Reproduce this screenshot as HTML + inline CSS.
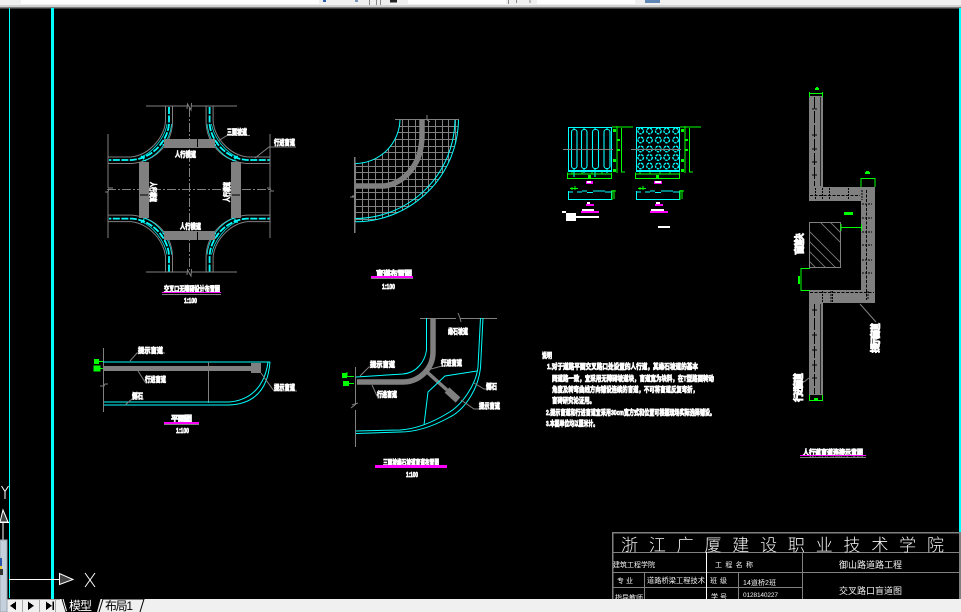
<!DOCTYPE html>
<html><head><meta charset="utf-8"><style>
html,body{margin:0;padding:0;background:#000;width:961px;height:612px;overflow:hidden}
svg{display:block}
text{font-family:"Liberation Sans","Noto Sans CJK SC",sans-serif}
.w{fill:#fff;stroke:#fff;stroke-width:.75;font-weight:700;font-size:7.500px}
.t{fill:#f2f2f2;font-size:7px}
.g{stroke:#808080;fill:none;stroke-width:1}
.c{stroke:#0ff;fill:none;stroke-width:1}
.l{stroke:#0f0;fill:none;stroke-width:1}
.f{fill:#808080}
.p{fill:#f0f}
.b{stroke:#000;fill:none;stroke-width:.8}
</style></head><body>
<svg width="961" height="612" viewBox="0 0 961 612" xmlns="http://www.w3.org/2000/svg" shape-rendering="crispEdges">
<defs>
<clipPath id="qc"><path d="M355 119H458V122A103 103 0 0 1 355 222V163A45 45 0 0 0 400 119Z"/></clipPath>
<g id="q" shape-rendering="auto">
<path class="g" d="M165.500 106V121C165 136 150 155 131 157H108"/>
<path class="g" d="M172.500 106V122C172 142 158 161 132 163.500H108"/>
<path class="c" style="stroke-width:1.800;stroke-dasharray:7 1.500" d="M169 107V122C169 138 155 158 132 160H109"/>
<path class="c" style="stroke-width:.7" d="M167 124C165 138 152 153 141 157M171.500 124C170 142 156 158 142 161"/>
<path class="c" style="stroke-width:1.500;stroke-dasharray:1.500 1.500" d="M161 142L165 147M141 156L146 161"/>
</g>
<g id="sec">
<path class="c" d="M568.500 191V199.500H611.500V191M568 192H573M577 192H582M582 191H587M587 192.500H593M593 191H599M599 191H605M605 192H611"/>
</g>
<g id="sg">
<path class="l" style="stroke-width:1.200" d="M0 -1H21M5 -2V45M9.500 0V44H13"/>
<rect x="1" y="31" width="3" height="3" fill="#0f0"/><rect x="1" y="1" width="3" height="3" fill="#0f0"/><rect x="1" y="41" width="3" height="3" fill="#0f0"/>
<rect x="5" y="11" width="3" height="2" fill="#0f0"/><rect x="5" y="21" width="3" height="2" fill="#0f0"/>
</g>
<g id="sg2">
<path class="l" d="M-44.500 1.500V7.500H-.5V1.500M-44 3H0"/>
<rect x="-24" y="4" width="3" height="3" fill="#0f0"/>
<path d="M-40 1V3M-30 1V3M-20 1V3M-10 1V3" class="l"/>
</g>
</defs>

<rect width="961" height="612" fill="#000"/>

<!-- toolbar -->
<rect width="961" height="5" fill="#f0f0f0"/>
<rect y="5" width="961" height="2" fill="#d2d2d2"/>
<rect y="7" width="961" height="1.500" fill="#7c7c7c"/>
<rect x="21" y="0" width="298" height="4" fill="#fff"/>
<rect x="408" y="0" width="98" height="4" fill="#fff"/>
<rect x="537" y="0" width="98" height="4" fill="#fff"/>
<rect x="645" y="0" width="15" height="3" fill="#5f86b5"/>
<rect x="390" y="0" width="7" height="2.500" fill="#222"/>
<rect x="323" y="0" width="3" height="2" fill="#2a5fb0"/><rect x="355" y="0" width="3" height="2" fill="#7a94b8"/>
<path d="M369.500 0V5M376.500 0V5M380.500 0V5M508.500 0V4M516.500 0V3M530 0V3" stroke="#888" fill="none"/>

<!-- viewport frame lines -->
<rect x="9" y="8" width="1" height="590" fill="#0ff"/>
<rect x="51" y="8" width="3" height="591" fill="#0ff"/>
<rect x="959" y="8" width="2" height="524" fill="#0ff"/>
<rect x="959" y="532" width="2" height="67" fill="#808080"/>

<!-- ============ Crossroad plan ============ -->
<g shape-rendering="auto">
<use href="#q"/>
<use href="#q" transform="translate(378.600 0) scale(-1 1)"/>
<use href="#q" transform="translate(0 378.600) scale(1 -1)"/>
<use href="#q" transform="translate(378.600 378.600) scale(-1 -1)"/>
</g>
<path class="g" d="M146 106H187M191 106H237M108 134V188M108 191V238M270 134V188M270 191V238M146 272H187M191 272H237"/>
<path class="g" style="stroke-dasharray:9 2 2 2" d="M189.500 108V270"/>
<path class="g" style="stroke-dasharray:9 2 2 2" d="M107 189.500H270"/>
<path class="g" shape-rendering="auto" d="M187 109L187.500 104L191 110L191.500 103M105 192H108L109 188L113 188M267 188H270L271 191L274 191M187 275L187.500 270L191 276L191.500 269"/>
<rect x="164" y="139" width="51" height="9" class="f"/>
<rect x="164" y="231" width="51" height="9" class="f"/>
<rect x="139" y="162" width="10" height="56" class="f"/>
<rect x="231" y="162" width="10" height="56" class="f"/>
<path d="M197.500 139V147M197.500 232V240M140 195H148M232 195H240" stroke="#000" fill="none"/>
<path class="g" shape-rendering="auto" d="M218 141L227 135.500H250M255 158L269 147H296"/>

<text class="w" x="175" y="157" textLength="21" lengthAdjust="spacingAndGlyphs">人行横道</text>
<text class="w" x="180" y="229" textLength="21" lengthAdjust="spacingAndGlyphs">人行横道</text>
<text class="w" x="227" y="134.500" textLength="20" lengthAdjust="spacingAndGlyphs">三面坡道</text>
<text class="w" x="274" y="145" textLength="21" lengthAdjust="spacingAndGlyphs">行进盲道</text>
<text class="w" transform="translate(150.500 182) rotate(90)" textLength="20" lengthAdjust="spacingAndGlyphs">人行横道</text>
<text class="w" transform="translate(229.500 202) rotate(-90)" textLength="20" lengthAdjust="spacingAndGlyphs">人行横道</text>
<text class="w" x="164" y="291.500" textLength="56" lengthAdjust="spacingAndGlyphs">交叉口无障碍设计布置图</text>
<rect x="162" y="292" width="59" height="1" class="p"/>
<rect x="162" y="294" width="59" height="1" fill="#808080"/>
<text class="w" x="184" y="303" textLength="13" lengthAdjust="spacingAndGlyphs">1:100</text>

<!-- ============ Grid quarter ============ -->
<g clip-path="url(#qc)">
<path class="g" d="M355.500 119V223M362.500 119V223M368.500 119V223M375.500 119V223M382.500 119V223M388.500 119V223M395.500 119V223M402.500 119V223M408.500 119V223M415.500 119V223M422.500 119V223M428.500 119V223M435.500 119V223M442.500 119V223M448.500 119V223M455.500 119V223"/>
<path class="g" d="M355 119.500H459M355 126.500H459M355 132.500H459M355 139.500H459M355 146.500H459M355 152.500H459M355 159.500H459M355 166.500H459M355 172.500H459M355 179.500H459M355 186.500H459M355 192.500H459M355 199.500H459M355 206.500H459M355 212.500H459M355 219.500H459"/>
</g>
<g shape-rendering="auto">
<path d="M355 186H382C398 186 422 170 422 135V119" stroke="#808080" stroke-width="5.500" fill="none"/>
<path class="c" d="M400 119.500A45 45 0 0 1 355 163.500"/>
<path class="c" d="M455 119.500A100 100 0 0 1 355 218.500"/>
<path class="c" d="M458.500 119.500A103.500 103.500 0 0 1 355 221.800"/>
</g>
<rect x="354" y="157" width="1.500" height="76" fill="#808080"/>
<path class="g" d="M395 119.500H459"/>
<path class="g" shape-rendering="auto" d="M427 115V120L430 122M352 196H355M350 197H354"/>
<text class="w" x="376" y="276" textLength="36" lengthAdjust="spacing">盲道布置图</text>
<rect x="371" y="276" width="42" height="2" class="p"/>
<rect x="371" y="278" width="42" height="1" fill="#808080"/>
<text class="w" x="382" y="289" textLength="13" lengthAdjust="spacingAndGlyphs">1:100</text>

<!-- ============ Tactile tiles ============ -->
<rect x="568.500" y="127.500" width="43" height="43" class="c"/>
<rect x="636.500" y="127.500" width="43" height="43" class="c"/>
<g shape-rendering="auto" class="c" style="stroke-width:1.100">
<rect x="571.500" y="129.500" width="5.500" height="39" rx="2.500"/>
<rect x="581.500" y="129.500" width="5.500" height="39" rx="2.500"/>
<rect x="592.500" y="129.500" width="6" height="39" rx="2.500"/>
<rect x="604" y="129.500" width="6" height="39" rx="2.500"/>
<path d="M574 130V127M584 130V127M595 130V127M607 130V127M574 168V177M584 168V173M595 168V177M607 168V173"/>
</g>
<g shape-rendering="auto" class="c" style="stroke-width:1.400;stroke-dasharray:2.500 .8">
<circle cx="640.700" cy="131" r="2.800"/><circle cx="649.500" cy="131" r="2.800"/><circle cx="658.300" cy="131" r="2.800"/><circle cx="666.700" cy="131" r="2.800"/><circle cx="675.700" cy="131" r="2.800"/>
<circle cx="640.700" cy="140" r="2.800"/><circle cx="649.500" cy="140" r="2.800"/><circle cx="658.300" cy="140" r="2.800"/><circle cx="666.700" cy="140" r="2.800"/><circle cx="675.700" cy="140" r="2.800"/>
<circle cx="640.700" cy="149" r="2.800"/><circle cx="649.500" cy="149" r="2.800"/><circle cx="658.300" cy="149" r="2.800"/><circle cx="666.700" cy="149" r="2.800"/><circle cx="675.700" cy="149" r="2.800"/>
<circle cx="640.700" cy="157.500" r="2.800"/><circle cx="649.500" cy="157.500" r="2.800"/><circle cx="658.300" cy="157.500" r="2.800"/><circle cx="666.700" cy="157.500" r="2.800"/><circle cx="675.700" cy="157.500" r="2.800"/>
<circle cx="640.700" cy="166" r="2.800"/><circle cx="649.500" cy="166" r="2.800"/><circle cx="658.300" cy="166" r="2.800"/><circle cx="666.700" cy="166" r="2.800"/><circle cx="675.700" cy="166" r="2.800"/>
</g>
<rect x="563" y="149" width="50" height="1" fill="#808080"/>
<rect x="631" y="149" width="50" height="1" fill="#808080"/>
<use href="#sg" x="612" y="128"/>
<use href="#sg" x="680" y="128"/>
<use href="#sg2" x="612" y="171"/>
<use href="#sg2" x="680" y="171"/>
<path class="c" d="M568 171.500H612M636 171.500H680"/>
<use href="#sec"/>
<use href="#sec" x="68"/>
<path class="l" style="stroke-width:1.300" d="M570 188.500H578M572 187V190M575 186V190M612 190V200M614 190V199M612 191H616M638 188.500H646M640 187V190M643 186V190M680 190V200M682 190V199M680 191H684"/>
<rect x="586" y="181" width="7" height="3" fill="#f0f"/><rect x="587" y="181" width="4" height="2" fill="#fff"/>
<rect x="654" y="181" width="8" height="3" fill="#f0f"/><rect x="655" y="181" width="6" height="2" fill="#fff"/>
<rect x="586" y="204" width="8" height="2" fill="#f0f"/><rect x="587" y="202" width="3" height="2" fill="#fff"/>
<rect x="655" y="204" width="8" height="2" fill="#f0f"/><rect x="656" y="202" width="4" height="2" fill="#fff"/>
<rect x="581" y="211" width="18" height="2" fill="#f0f"/><rect x="582" y="209" width="12" height="2" fill="#fff"/>
<rect x="650" y="211" width="18" height="2" fill="#f0f"/><rect x="651" y="209" width="13" height="2" fill="#fff"/>
<rect x="566" y="213" width="10" height="8" fill="#fff"/><rect x="562" y="211" width="4" height="2" fill="#fff"/><rect x="576" y="216" width="23" height="2" fill="#fff"/>
<rect x="658" y="226" width="12" height="2" fill="#fff"/>

<!-- ============ Wall diagram ============ -->
<path class="f" d="M809 96H823V187H875V303H823V395H809V290H861V201H809Z"/>
<path d="M814.500 97V186M820.500 97V186M814.500 304V394M820.500 304V394" stroke="#000" fill="none" style="stroke-dasharray:12 2"/>
<path d="M820.500 97V186M820.500 304V394" stroke="#2a2a2a" fill="none"/>
<path d="M810 195.500H860M866.500 190V300M810 292.500H874" stroke="#000" fill="none" style="stroke-dasharray:3 1.500"/>
<path d="M815.500 188V200M822.500 188V200M829.500 188V200M848.500 188V200M862 204H872M862 218H872M862 232H872M862 245H872M862 260H872M862 273H872M822.500 291V302M831 291V302M832.500 291V302M862 190V200M868 291V300M812 109H818M812 135H818M812 149H818M812 162H818M812 175H818M812 310H818M812 335H818M812 350H818M812 365H818M812 378H818" stroke="#000" fill="none" style="stroke-dasharray:2 1"/>
<rect x="809.500" y="222.500" width="31" height="45" fill="#000" stroke="#808080"/>
<clipPath id="hc"><rect x="810" y="223" width="30" height="44"/></clipPath>
<g clip-path="url(#hc)" shape-rendering="auto" stroke="#808080" fill="none" stroke-width=".8">
<path d="M800 222L850 272M800 232L850 282M800 242L850 292M800 252L850 302M810 212L860 262M820 212L870 262M790 222L840 272"/>
</g>
<path class="l" d="M841 227.500H861.500M861.500 224V231M841 224V231M861 178V187M875 178V187M861 178.500H875M809.500 93.500H822.500M809.500 92V97M822.500 92V97M809.500 400.500H822.500M809.500 395V401M822.500 395V401M810 268.500H801V290.500H810M801 268V291" style="stroke-width:1.200"/>
<rect x="815" y="88" width="4" height="2" fill="#0f0"/><rect x="816" y="87" width="2" height="1" fill="#0f0"/>
<rect x="865" y="172" width="5" height="2" fill="#0f0"/><rect x="866" y="171" width="3" height="1" fill="#0f0"/>
<rect x="844" y="212" width="9" height="3" fill="#0f0"/>
<rect x="798" y="276" width="2" height="8" fill="#0f0"/>
<rect x="814" y="398" width="4" height="2" fill="#0f0"/>
<path class="g" shape-rendering="auto" d="M860 304L876 322M803 382C805 382 806 380 809 378"/>
<text class="w" transform="translate(803 255) rotate(-90)" textLength="22" lengthAdjust="spacing" style="font-size:10px">盲道块</text>
<text class="w" transform="translate(802 402) rotate(-90)" textLength="29" lengthAdjust="spacing" style="font-size:10px">行进盲道</text>
<text class="w" transform="translate(879 353) rotate(-90)" textLength="30" lengthAdjust="spacing" style="font-size:10px">提示盲道</text>
<text class="w" x="803" y="455" textLength="60" lengthAdjust="spacingAndGlyphs">人行道盲道连接示意图</text>
<rect x="800" y="455" width="66" height="1" class="p"/>
<rect x="800" y="457" width="66" height="1" fill="#808080"/>

<!-- ============ Plan view ============ -->
<rect x="103" y="348" width="1" height="64" fill="#808080"/>
<path class="c" d="M103 362H270"/>
<rect x="103" y="366" width="148" height="5" class="f"/>
<rect x="251" y="363" width="10" height="10" class="f"/>
<rect x="208" y="362" width="1" height="41" fill="#808080"/>
<g shape-rendering="auto">
<path class="c" d="M104 402H229C252 400 265 385 268 362"/>
<path class="c" d="M104 405H229C256 404 268 388 270 362"/>
<path class="g" d="M130 361L137 353H165M138 371L145 382H166M125 405L132 399H144M261 373L274 391H297M100 386H104L105 384H108"/>
</g>
<rect x="94" y="359" width="5" height="5" fill="#0f0"/><rect x="94" y="366" width="6" height="5" fill="#0f0" stroke="#0f0"/>
<path class="l" d="M99 361.500H103M99 368.500H103"/>
<text class="w" x="138" y="353" textLength="25" lengthAdjust="spacingAndGlyphs">提示盲道</text>
<text class="w" x="145" y="382" textLength="21" lengthAdjust="spacingAndGlyphs">行进盲道</text>
<text class="w" x="132" y="398.500" textLength="11" lengthAdjust="spacingAndGlyphs">侧石</text>
<text class="w" x="274" y="390" textLength="21" lengthAdjust="spacingAndGlyphs">提示盲道</text>
<text class="w" x="171" y="421" textLength="21" lengthAdjust="spacing">平面图</text>
<rect x="164" y="422" width="35" height="2" class="p"/><rect x="164" y="424" width="35" height="1" fill="#808080"/>
<text class="w" x="176" y="433" textLength="13" lengthAdjust="spacingAndGlyphs">1:100</text>

<!-- ============ Three-side ramp ============ -->
<path class="g" d="M420 318.500H456M460 318.500H497M355.500 367V405M355.500 410V447"/>
<g shape-rendering="auto">
<path d="M433 318V352C433 370 418 382 403 382H357" stroke="#808080" stroke-width="5.500" fill="none"/>
<path d="M427 372L447 390" stroke="#808080" stroke-width="3.500" fill="none"/>
<path d="M447 390L458 400" stroke="#808080" stroke-width="7" fill="none"/>
<path class="c" d="M426.500 318V350C425 362 416 373 403 374L356 377"/>
<path class="c" d="M480.500 318L478 367C476 385 462 405 448 413C430 424 415 429 400 430L356 431"/>
<path class="c" d="M483 318L480.500 368C478 390 464 410 450 417C432 427 415 432 400 432L356 433.500"/>
<path class="c" d="M477 371L445 376L428 392L424 425"/>
<path class="g" d="M458 313L460 318L461 322M355 405L351 408M352 405L358 403M360 376L369 367H395M372 385L377 396H397M431 369L442 366H462M474 383L484 389H497M461 400L474 409H500"/>
</g>
<rect x="342" y="373" width="5" height="5" fill="#0f0"/><rect x="343" y="381" width="6" height="5" fill="#0f0"/>
<path class="l" d="M347 376.500H354M349 383.500H354M347 372V377"/>
<text class="w" x="448" y="334" textLength="20" lengthAdjust="spacingAndGlyphs">缘石坡道</text>
<text class="w" x="370" y="367" textLength="25" lengthAdjust="spacingAndGlyphs">提示盲道</text>
<text class="w" x="441" y="365.500" textLength="21" lengthAdjust="spacingAndGlyphs">行进盲道</text>
<text class="w" x="377" y="397" textLength="20" lengthAdjust="spacingAndGlyphs">行进盲道</text>
<text class="w" x="486" y="389" textLength="11" lengthAdjust="spacingAndGlyphs">侧石</text>
<text class="w" x="479" y="408.500" textLength="21" lengthAdjust="spacingAndGlyphs">提示盲道</text>
<text class="w" x="383" y="465" textLength="56" lengthAdjust="spacingAndGlyphs">三面坡缘石坡道盲道布置图</text>
<rect x="375" y="465" width="72" height="3" class="p"/>
<text class="w" x="406" y="477" textLength="12" lengthAdjust="spacingAndGlyphs">1:100</text>

<!-- ============ Notes ============ -->
<text class="w" x="542" y="358" textLength="10" lengthAdjust="spacingAndGlyphs">说明</text>
<text class="w" x="547" y="369" textLength="151" lengthAdjust="spacingAndGlyphs">1.对于道路平面交叉路口处设置的人行道，其缘石坡道的基本</text>
<text class="w" x="552" y="381" textLength="162" lengthAdjust="spacingAndGlyphs">同道路一致，宜采用无障碍坡道块，盲道宽为块料，在T型路面转动</text>
<text class="w" x="552" y="392" textLength="146" lengthAdjust="spacingAndGlyphs">角度及转弯曲线方向铺设连续的盲道，不可将盲道反复弯折，</text>
<text class="w" x="552" y="403" textLength="43" lengthAdjust="spacingAndGlyphs">盲砖研究论证用。</text>
<text class="w" x="546" y="415" textLength="169" lengthAdjust="spacingAndGlyphs">2.提示盲道和行进盲道宜采用30cm宽方式和位置可根据现场实际选择铺设。</text>
<text class="w" x="546" y="426" textLength="52" lengthAdjust="spacingAndGlyphs">3.本图单位均以厘米计。</text>

<!-- ============ Title block ============ -->
<path class="g" style="stroke-width:1.500" d="M612.500 532.500H959.500M612.500 532V599M959.500 532V599"/>
<path class="g" d="M613 552.500H959M613 572.500H959M613 587.500H802M802.500 552V599M644.500 572V599M738.500 572V599"/>
<path d="M706.500 552V599" stroke="#fff" fill="none"/>
<g shape-rendering="auto">
<text x="621" y="551" textLength="323" lengthAdjust="spacing" style="font-size:17px;fill:#f4f4f4;font-family:'Noto Sans CJK SC',sans-serif;font-weight:300">浙江广厦建设职业技术学院</text>
<text class="t" x="613" y="567" textLength="42">建筑工程学院</text>
<text class="t" x="715" y="567" textLength="38" lengthAdjust="spacing">工程名称</text>
<text class="t" x="839" y="568" textLength="63" style="font-size:9px">御山路道路工程</text>
<text class="t" x="617" y="583" textLength="16" lengthAdjust="spacing">专业</text>
<text class="t" x="647" y="583" textLength="58" style="font-size:7.200px">道路桥梁工程技术</text>
<text class="t" x="710" y="583" textLength="17" lengthAdjust="spacing">班级</text>
<text class="t" x="743" y="585" textLength="33" style="font-size:7px">14道桥2班</text>
<text class="t" x="711" y="599" textLength="16" lengthAdjust="spacing">学号</text>
<text class="t" x="743" y="597" textLength="35" style="font-size:6.500px">0128140227</text>
<text class="t" x="615" y="600" textLength="28">指导教师</text>
<text class="t" x="839" y="594" textLength="63" style="font-size:9px">交叉路口盲道图</text>
</g>

<!-- ============ UCS icon ============ -->
<g shape-rendering="auto" stroke="#fff" fill="none" stroke-width="1">
<path d="M1.500 486L5 491.500L8.500 486M5 491.500V499"/>
<path d="M3 510L0 522H8Z" fill="#444"/>
<path d="M0 522.500H9M3 523V540M7 573V584M9 579.500H59"/>
<path d="M59.500 573.500V584.500L73 579.500Z" fill="#444"/>
<path d="M85 573L95 587M95 573L85 587"/>
</g>

<!-- ============ Bottom tab bar ============ -->
<rect x="0" y="599" width="961" height="13" fill="#f0f0f0"/>
<rect x="0" y="540" width="7" height="72" fill="#c4d0dc" stroke="#9aa6b2"/>
<rect x="0" y="558" width="2" height="8" fill="#2b55a8"/>
<rect x="0" y="566" width="2" height="3" fill="#e4c83a"/>
<rect x="0" y="569" width="3" height="6" fill="#333"/>
<path d="M22.500 599V612M39.500 599V612M55.500 599V612M7 599.500H60" stroke="#a8a8a8" fill="none"/>
<path d="M16 601.500V610L10 605.800Z" fill="#000"/>
<path d="M28 601.500V610L34 605.800Z" fill="#000"/>
<path d="M46 601.500V610L52 605.800Z" fill="#000"/>
<rect x="52.500" y="601.500" width="1.500" height="8.500" fill="#000"/>
<path d="M62 599L66.500 612H97L100.500 599Z" fill="#000" shape-rendering="auto"/>
<path d="M62 599L66 612M100 599L96 612M99 612L103 599H144L140 612" stroke="#000" fill="none" shape-rendering="auto"/>
<path d="M63 599L66.500 611" stroke="#fff" fill="none" shape-rendering="auto"/>
<text x="69" y="610" textLength="23" shape-rendering="auto" style="font-size:12px;fill:#fff">模型</text>
<text x="105" y="610" textLength="28" shape-rendering="auto" style="font-size:12px;fill:#000">布局1</text>
</svg>
</body></html>
